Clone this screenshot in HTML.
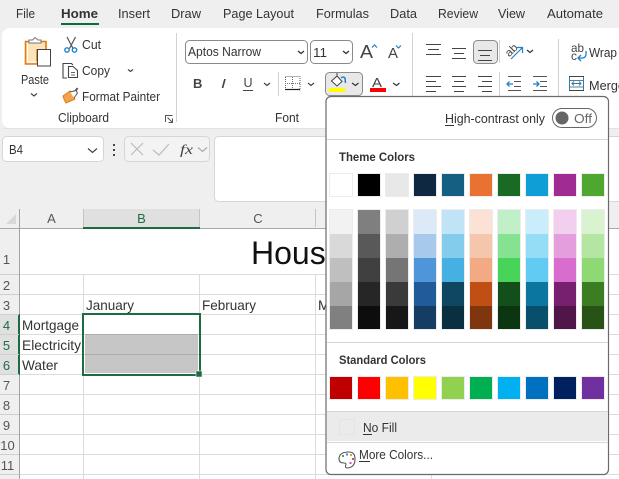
<!DOCTYPE html>
<html><head><meta charset="utf-8"><style>
html,body{margin:0;padding:0;background:#efefef;width:619px;height:479px;overflow:hidden}
svg{display:block}
text{font-family:"Liberation Sans",sans-serif;fill:#333}
</style></head><body>
<svg width="619" height="479" viewBox="0 0 619 479" xmlns="http://www.w3.org/2000/svg">
<rect width="619" height="479" fill="#efefef"/>
<!-- tabs -->
<g font-size="13">
<text x="16" y="18" textLength="19" lengthAdjust="spacingAndGlyphs">File</text>
<text x="61" y="18" textLength="37" lengthAdjust="spacingAndGlyphs" font-weight="bold" style="fill:#333">Home</text>
<text x="118" y="18" textLength="32" lengthAdjust="spacingAndGlyphs">Insert</text>
<text x="171" y="18" textLength="30" lengthAdjust="spacingAndGlyphs">Draw</text>
<text x="223" y="18" textLength="71" lengthAdjust="spacingAndGlyphs">Page Layout</text>
<text x="316" y="18" textLength="53" lengthAdjust="spacingAndGlyphs">Formulas</text>
<text x="390" y="18" textLength="27" lengthAdjust="spacingAndGlyphs">Data</text>
<text x="438" y="18" textLength="40" lengthAdjust="spacingAndGlyphs">Review</text>
<text x="498" y="18" textLength="27" lengthAdjust="spacingAndGlyphs">View</text>
<text x="547" y="18" textLength="56" lengthAdjust="spacingAndGlyphs">Automate</text>
</g>
<rect x="61" y="23" width="38" height="2" fill="#0f6b3c"/>
<!-- ribbon -->
<rect x="2" y="28" width="640" height="100" rx="8" fill="#fff"/>
<path d="M3 128.500H619" stroke="#e2e2e2"/>
<g stroke="#d2d2d2"><path d="M176.500 33V122M412.500 33V96M558.500 39V96M278.500 72V96M499.500 40V63M499.500 72V96"/></g>
<!-- paste -->
<path d="M25.500 41.500H46V50H37V64H25.500Z" fill="#fde3b8" stroke="#e07b10" stroke-width="1.600"/>
<path d="M27.500 43V62H37" fill="none" stroke="#fff" stroke-width="1"/>
<path d="M29 43V40H32.500L35 37.500L38 40H41V43Z" fill="#fff" stroke="#777"/>
<rect x="37.500" y="49.500" width="13" height="16.500" fill="#fff" stroke="#444"/>
<text x="21" y="84" font-size="12.500" textLength="28" lengthAdjust="spacingAndGlyphs">Paste</text>
<path d="M31 93.500L34 96L37 93.500" fill="none" stroke="#444" stroke-width="1.200"/>
<!-- cut -->
<path d="M67 37L73 48.500M75.500 37L69.500 48.500" stroke="#555" stroke-width="1.200" fill="none"/>
<circle cx="67" cy="50" r="2.200" fill="none" stroke="#1b82c8" stroke-width="1.400"/><circle cx="74.500" cy="50" r="2.200" fill="none" stroke="#1b82c8" stroke-width="1.400"/>
<text x="82" y="49" font-size="12.500" textLength="19" lengthAdjust="spacingAndGlyphs">Cut</text>
<!-- copy -->
<path d="M67 78H63V63.500H71.500L73 65" fill="none" stroke="#444" stroke-width="1.100"/>
<path d="M68.500 77.500V66.500H73L77.500 70.500V77.500Z" fill="#fff" stroke="#444" stroke-width="1.100"/>
<path d="M71 72.500H75M71 75H75" stroke="#666"/>
<text x="82" y="75" font-size="12.500" textLength="28" lengthAdjust="spacingAndGlyphs">Copy</text>
<path d="M128 69.500L130.500 71.500L133 69.500" fill="none" stroke="#444" stroke-width="1.200"/>
<!-- format painter -->
<path d="M63 96L70 91L75 99L66 103Q64 100 63 96Z" fill="#f5a34a" stroke="#dd7a1a"/>
<path d="M70 92L76 90.500L77.500 93L74 98" fill="#fff" stroke="#555"/>
<path d="M75.500 91L77.500 88" stroke="#555" stroke-width="2"/>
<text x="82" y="101" font-size="12.500" textLength="78" lengthAdjust="spacingAndGlyphs">Format Painter</text>
<text x="58" y="122" font-size="12.500" textLength="51" lengthAdjust="spacingAndGlyphs">Clipboard</text>
<path d="M165.500 122V115.500H172.500M167.500 117.500L172 122M172.500 118.500V122.500H168.500" fill="none" stroke="#555"/>
<!-- font combos -->
<rect x="185.500" y="40.500" width="122" height="23" rx="4" fill="#fff" stroke="#8a8a8a"/>
<text x="188" y="56" font-size="12.500" textLength="73" lengthAdjust="spacingAndGlyphs">Aptos Narrow</text>
<path d="M298 51L301 53.500L304 51" fill="none" stroke="#333" stroke-width="1.300"/>
<rect x="310.500" y="40.500" width="42" height="23" rx="4" fill="#fff" stroke="#8a8a8a"/>
<text x="313" y="57" font-size="12.500" textLength="14" lengthAdjust="spacingAndGlyphs">11</text>
<path d="M343 51L346 53.500L349 51" fill="none" stroke="#333" stroke-width="1.300"/>
<text x="360" y="58" font-size="18" textLength="13" lengthAdjust="spacingAndGlyphs" style="fill:#444">A</text>
<path d="M372 47.500L374.500 45L377 47.500" fill="none" stroke="#1b82c8" stroke-width="1.200"/>
<text x="388" y="58" font-size="14.500" textLength="10" lengthAdjust="spacingAndGlyphs" style="fill:#444">A</text>
<path d="M396 45.500L398.500 48L401 45.500" fill="none" stroke="#1b82c8" stroke-width="1.200"/>
<!-- B I U -->
<text x="193" y="88" font-size="13" font-weight="bold" style="fill:#444">B</text>
<text x="221" y="88" font-size="13" font-style="italic" style="fill:#444" textLength="5" lengthAdjust="spacingAndGlyphs">I</text>
<text x="243.500" y="87" font-size="12.500" style="fill:#444">U</text>
<path d="M243 90.500H253" stroke="#444"/>
<path d="M264 83L267 85.500L270 83" fill="none" stroke="#444" stroke-width="1.200"/>
<path d="M285.500 76.500H300V90.500" fill="none" stroke="#666" stroke-dasharray="1 1"/>
<path d="M285.500 77V90" fill="none" stroke="#666" stroke-dasharray="1 1"/>
<path d="M285 83.500H300M292.500 77V90" stroke="#777" stroke-dasharray="1 1"/>
<path d="M285 89.500H300" stroke="#222" stroke-width="1.200"/>
<path d="M308 83L311 85.500L314 83" fill="none" stroke="#444" stroke-width="1.200"/>
<text x="275" y="122" font-size="12.500" textLength="24" lengthAdjust="spacingAndGlyphs">Font</text>
<!-- fill button -->
<rect x="325.500" y="72.500" width="37" height="23" rx="4" fill="#e8e8e8" stroke="#8a8a8a"/>
<path d="M331.500 81L337 76L342 81.500L337 86Z" fill="#fff" stroke="#444"/>
<path d="M337 76V73" stroke="#444"/>
<path d="M341 78Q343 76 345 78L345.500 83" fill="none" stroke="#1b82c8" stroke-width="1.500"/>
<rect x="329" y="88" width="16" height="4" fill="#ffff00"/>
<path d="M352 83L355.500 85.500L358.500 83" fill="none" stroke="#333" stroke-width="1.200"/>
<text x="372" y="87" font-size="13" textLength="10" lengthAdjust="spacingAndGlyphs" style="fill:#444">A</text>
<rect x="370" y="88" width="16" height="4" fill="#ff0000"/>
<path d="M393 83L396.500 85.500L399.500 83" fill="none" stroke="#333" stroke-width="1.200"/>
<!-- alignment -->
<g stroke="#444" stroke-width="1" fill="none">
<path d="M426 44.500H441M428 49.500H439M426 54.500H441"/>
<path d="M452 48.500H466M454 53.500H464M452 58.500H466"/>
</g>
<rect x="473.500" y="40.500" width="24" height="23" rx="4" fill="#e8e8e8" stroke="#8a8a8a"/>
<path d="M478 50.500H492M480 55.500H490M478 60.500H492" stroke="#444" fill="none"/>
<g stroke="#444" fill="none">
<path d="M426 76.500H441M426 81.500H436M426 86.500H441M426 91.500H436"/>
<path d="M452 76.500H466M454 81.500H464M452 86.500H466M454 91.500H464"/>
<path d="M478 76.500H492M482 81.500H492M478 86.500H492M482 91.500H492"/>
<path d="M508 76.500H521M514 81.500H521M514 86.500H521M508 90.500H521" stroke="#555"/>
<path d="M533 76.500H547M540 81.500H547M540 86.500H547M533 90.500H547" stroke="#555"/>
</g>
<path d="M513 84H507M509.500 81.500L507 84L509.500 86.500" fill="none" stroke="#1b82c8" stroke-width="1.300"/>
<path d="M533 84H539M536.500 81.500L539 84L536.500 86.500" fill="none" stroke="#1b82c8" stroke-width="1.300"/>
<!-- orientation -->
<text x="505" y="55" font-size="11" transform="rotate(-45 510 51)" textLength="13" lengthAdjust="spacingAndGlyphs" style="fill:#444">ab</text>
<path d="M511 59L522 48M517 47.500H522.500V53" fill="none" stroke="#1b82c8" stroke-width="1.200"/>
<path d="M527 50L530 52.500L533 50" fill="none" stroke="#333" stroke-width="1.200"/>
<!-- wrap / merge -->
<text x="571" y="52" font-size="12" textLength="13" lengthAdjust="spacingAndGlyphs" style="fill:#444">ab</text>
<text x="571" y="60" font-size="12" style="fill:#444">c</text>
<path d="M586 51V54Q586 58 582 58H578M581 55L578 58L581 61" fill="none" stroke="#1b82c8" stroke-width="1.300"/>
<text x="589" y="57" font-size="13" textLength="28" lengthAdjust="spacingAndGlyphs">Wrap</text>
<rect x="569.500" y="76.500" width="14" height="14" fill="#fff" stroke="#2a7fb8"/>
<path d="M569 76.500H584M569 90.500H584" stroke="#444"/>
<path d="M570 80.500H583M570 87H583" stroke="#777"/>
<path d="M572 83.500H581M574 81.500L572 83.500L574 85.500M579 81.500L581 83.500L579 85.500" fill="none" stroke="#1b82c8"/>
<text x="589" y="90" font-size="13" textLength="36" lengthAdjust="spacingAndGlyphs">Merge</text>
<!-- formula bar -->
<rect x="2.500" y="136.500" width="101" height="25" rx="4" fill="#fff" stroke="#d6d6d6"/>
<text x="9" y="154" font-size="12.500" textLength="14" lengthAdjust="spacingAndGlyphs">B4</text>
<path d="M88 148.500L92.500 152.500L97 148.500" fill="none" stroke="#444" stroke-width="1.200"/>
<g fill="#444"><rect x="113" y="144" width="2" height="2"/><rect x="113" y="149" width="2" height="2"/><rect x="113" y="154" width="2" height="2"/></g>
<rect x="124.500" y="136.500" width="85" height="25" rx="4" fill="#f3f3f3" stroke="#d6d6d6"/>
<path d="M131 143L143 155M143 143L131 155" stroke="#bcbcbc" stroke-width="1.200"/>
<path d="M153 150L159 155L169 144" fill="none" stroke="#bcbcbc" stroke-width="1.200"/>
<text x="180" y="154" font-size="14" font-style="italic" style="font-family:'Liberation Serif';fill:#444" textLength="13" lengthAdjust="spacingAndGlyphs">fx</text>
<path d="M198 147.500L202.500 151.500L207 147.500" fill="none" stroke="#aaa" stroke-width="1.200"/>
<rect x="214.500" y="136.500" width="420" height="65" rx="4" fill="#fff" stroke="#d6d6d6"/>
<!-- sheet -->
<rect x="0" y="209" width="619" height="20" fill="#efefef"/>
<rect x="20" y="229" width="599" height="250" fill="#fff"/>
<rect x="84" y="209" width="116" height="19" fill="#e0e0e0"/>
<rect x="83" y="227" width="117" height="2" fill="#1e6b43"/>
<rect x="0" y="314" width="19" height="60" fill="#e0e0e0"/>
<rect x="18" y="314" width="2" height="61" fill="#1e6b43"/>
<path d="M6 224L16 214V224Z" fill="#d8d8d8"/>
<path d="M83.500 209V227M199.500 209V227M315.500 209V227" stroke="#c4c4c4"/>
<path d="M0 228.500H83M200 228.500H619" stroke="#a8a8a8"/>
<path d="M19.500 209V314M19.500 375V479" stroke="#a3a3a3"/>
<g stroke="#dcdcdc">
<path d="M83.500 274V479M199.500 274V479M315.500 274V479M431.500 274V479"/>
<path d="M20 274.500H619M20 294.500H619M20 314.500H619M20 334.500H619M20 354.500H619M20 374.500H619M20 394.500H619M20 414.500H619M20 434.500H619M20 454.500H619M20 474.500H619"/>
<path d="M0 274.500H19M0 294.500H19M0 314.500H19M0 334.500H19M0 354.500H19M0 374.500H19M0 394.500H19M0 414.500H19M0 434.500H19M0 454.500H19M0 474.500H19" stroke="#cfcfcf"/>
</g>
<g font-size="13" text-anchor="middle">
<text x="51.500" y="223" style="fill:#555">A</text><text x="141.500" y="223" style="fill:#1e6b43">B</text><text x="258" y="223" style="fill:#555">C</text>
<text x="6.500" y="264" style="fill:#555">1</text><text x="6.500" y="290" style="fill:#555">2</text><text x="6.500" y="310" style="fill:#555">3</text>
<text x="6.500" y="330" style="fill:#1e6b43">4</text><text x="6.500" y="350" style="fill:#1e6b43">5</text><text x="6.500" y="370" style="fill:#1e6b43">6</text>
<text x="6.500" y="390" style="fill:#555">7</text><text x="6.500" y="410" style="fill:#555">8</text><text x="6.500" y="430" style="fill:#555">9</text>
<text x="7.500" y="450" style="fill:#555">10</text><text x="7.500" y="470" style="fill:#555">11</text>
</g>
<text x="251" y="264" font-size="32" style="fill:#111">Hous</text>
<g font-size="14">
<text x="86" y="310" textLength="48" lengthAdjust="spacingAndGlyphs">January</text>
<text x="202" y="310" textLength="54" lengthAdjust="spacingAndGlyphs">February</text>
<text x="318" y="310">M</text>
<text x="22" y="330" textLength="57" lengthAdjust="spacingAndGlyphs">Mortgage</text>
<text x="22" y="350" textLength="59" lengthAdjust="spacingAndGlyphs">Electricity</text>
<text x="22" y="370" textLength="36" lengthAdjust="spacingAndGlyphs">Water</text>
</g>
<rect x="85" y="334" width="113" height="39" fill="#c6c6c6"/>
<path d="M85 334.500H198M85 354.500H198" stroke="#acacac"/>
<rect x="83" y="314" width="117" height="61" fill="none" stroke="#1e6b43" stroke-width="2"/>
<rect x="196" y="371" width="6" height="6" fill="#1e6b43" stroke="#fff" stroke-width="0.500"/>
<!-- popup -->
<rect x="326" y="96.500" width="282.500" height="378" rx="5" fill="#fff" stroke="#6a6a6a" stroke-width="1.200"/>
<text x="445" y="123" font-size="12.500" textLength="100" lengthAdjust="spacingAndGlyphs">High-contrast only</text>
<path d="M445 125.500H454" stroke="#333"/>
<rect x="552.500" y="108.500" width="44" height="19" rx="9.500" fill="#fff" stroke="#666"/>
<circle cx="562" cy="118" r="6.500" fill="#666"/>
<text x="574" y="123" font-size="12.500" style="fill:#666" textLength="18" lengthAdjust="spacingAndGlyphs">Off</text>
<path d="M327 139.500H608M327 342.500H608M327 411.500H608M327 442.500H608" stroke="#d6d6d6"/>
<text x="339" y="161" font-size="12" font-weight="bold" textLength="76" lengthAdjust="spacingAndGlyphs" style="fill:#333">Theme Colors</text>
<text x="339" y="364" font-size="12" font-weight="bold" textLength="87" lengthAdjust="spacingAndGlyphs" style="fill:#333">Standard Colors</text>
<!-- theme row -->
<g stroke="#ececec" stroke-width="1">
<rect x="329.500" y="173.500" width="23" height="23" fill="#ffffff"/>
<rect x="357.500" y="173.500" width="23" height="23" fill="#000000"/>
<rect x="385.500" y="173.500" width="23" height="23" fill="#e8e8e8"/>
<rect x="413.500" y="173.500" width="23" height="23" fill="#0e2841"/>
<rect x="441.500" y="173.500" width="23" height="23" fill="#156082"/>
<rect x="469.500" y="173.500" width="23" height="23" fill="#e97132"/>
<rect x="497.500" y="173.500" width="23" height="23" fill="#196b24"/>
<rect x="525.500" y="173.500" width="23" height="23" fill="#0f9ed5"/>
<rect x="553.500" y="173.500" width="23" height="23" fill="#a02b93"/>
<rect x="581.500" y="173.500" width="23" height="23" fill="#4ea72e"/>
</g>
<!-- shades frame -->
<g fill="none" stroke="#ececec">
<rect x="329.500" y="209.500" width="23" height="120"/><rect x="357.500" y="209.500" width="23" height="120"/><rect x="385.500" y="209.500" width="23" height="120"/><rect x="413.500" y="209.500" width="23" height="120"/><rect x="441.500" y="209.500" width="23" height="120"/><rect x="469.500" y="209.500" width="23" height="120"/><rect x="497.500" y="209.500" width="23" height="120"/><rect x="525.500" y="209.500" width="23" height="120"/><rect x="553.500" y="209.500" width="23" height="120"/><rect x="581.500" y="209.500" width="23" height="120"/>
</g>
<g>
<rect x="330" y="210" width="22" height="24" fill="#f2f2f2"/><rect x="330" y="234" width="22" height="24" fill="#d9d9d9"/><rect x="330" y="258" width="22" height="24" fill="#bfbfbf"/><rect x="330" y="282" width="22" height="24" fill="#a6a6a6"/><rect x="330" y="306" width="22" height="23" fill="#808080"/>
<rect x="358" y="210" width="22" height="24" fill="#7f7f7f"/><rect x="358" y="234" width="22" height="24" fill="#595959"/><rect x="358" y="258" width="22" height="24" fill="#404040"/><rect x="358" y="282" width="22" height="24" fill="#262626"/><rect x="358" y="306" width="22" height="23" fill="#0d0d0d"/>
<rect x="386" y="210" width="22" height="24" fill="#d0d0d0"/><rect x="386" y="234" width="22" height="24" fill="#aeaeae"/><rect x="386" y="258" width="22" height="24" fill="#757575"/><rect x="386" y="282" width="22" height="24" fill="#3a3a3a"/><rect x="386" y="306" width="22" height="23" fill="#171717"/>
<rect x="414" y="210" width="22" height="24" fill="#dce9f7"/><rect x="414" y="234" width="22" height="24" fill="#a6c9ec"/><rect x="414" y="258" width="22" height="24" fill="#4e95d9"/><rect x="414" y="282" width="22" height="24" fill="#215c98"/><rect x="414" y="306" width="22" height="23" fill="#153d64"/>
<rect x="442" y="210" width="22" height="24" fill="#c0e4f5"/><rect x="442" y="234" width="22" height="24" fill="#83cceb"/><rect x="442" y="258" width="22" height="24" fill="#45b0e1"/><rect x="442" y="282" width="22" height="24" fill="#0f4761"/><rect x="442" y="306" width="22" height="23" fill="#0a2f41"/>
<rect x="470" y="210" width="22" height="24" fill="#fbe2d5"/><rect x="470" y="234" width="22" height="24" fill="#f6c6ac"/><rect x="470" y="258" width="22" height="24" fill="#f2aa84"/><rect x="470" y="282" width="22" height="24" fill="#c04f15"/><rect x="470" y="306" width="22" height="23" fill="#7f350e"/>
<rect x="498" y="210" width="22" height="24" fill="#c1f0c8"/><rect x="498" y="234" width="22" height="24" fill="#84e291"/><rect x="498" y="258" width="22" height="24" fill="#47d459"/><rect x="498" y="282" width="22" height="24" fill="#124f1a"/><rect x="498" y="306" width="22" height="23" fill="#0c3511"/>
<rect x="526" y="210" width="22" height="24" fill="#caedfb"/><rect x="526" y="234" width="22" height="24" fill="#95dcf7"/><rect x="526" y="258" width="22" height="24" fill="#61cbf3"/><rect x="526" y="282" width="22" height="24" fill="#0b76a0"/><rect x="526" y="306" width="22" height="23" fill="#074f6a"/>
<rect x="554" y="210" width="22" height="24" fill="#f2ceef"/><rect x="554" y="234" width="22" height="24" fill="#e59edd"/><rect x="554" y="258" width="22" height="24" fill="#d86dcd"/><rect x="554" y="282" width="22" height="24" fill="#782070"/><rect x="554" y="306" width="22" height="23" fill="#501549"/>
<rect x="582" y="210" width="22" height="24" fill="#d9f2d0"/><rect x="582" y="234" width="22" height="24" fill="#b4e5a2"/><rect x="582" y="258" width="22" height="24" fill="#8ed973"/><rect x="582" y="282" width="22" height="24" fill="#3b7d23"/><rect x="582" y="306" width="22" height="23" fill="#275317"/>
</g>
<!-- standard -->
<g stroke="#ececec">
<rect x="329.500" y="376.500" width="23" height="23" fill="#c00000"/>
<rect x="357.500" y="376.500" width="23" height="23" fill="#ff0000"/>
<rect x="385.500" y="376.500" width="23" height="23" fill="#ffc000"/>
<rect x="413.500" y="376.500" width="23" height="23" fill="#ffff00"/>
<rect x="441.500" y="376.500" width="23" height="23" fill="#92d050"/>
<rect x="469.500" y="376.500" width="23" height="23" fill="#00b050"/>
<rect x="497.500" y="376.500" width="23" height="23" fill="#00b0f0"/>
<rect x="525.500" y="376.500" width="23" height="23" fill="#0070c0"/>
<rect x="553.500" y="376.500" width="23" height="23" fill="#002060"/>
<rect x="581.500" y="376.500" width="23" height="23" fill="#7030a0"/>
</g>
<!-- no fill -->
<rect x="327" y="412" width="281" height="29" fill="#ebebeb"/>
<rect x="339.500" y="419.500" width="15" height="15" fill="none" stroke="#e4e4e4"/>
<text x="363" y="432" font-size="12.500" textLength="34" lengthAdjust="spacingAndGlyphs">No Fill</text>
<path d="M363 434.500H372" stroke="#333"/>
<!-- more colours -->
<path d="M349 452Q339 452 339 459Q339 463 344 463Q347 463 345.500 466Q345 468 348 468Q355 467 355 459Q355 452 349 452Z" fill="#fff" stroke="#555" stroke-width="1.100"/>
<g>
<rect x="342" y="455" width="2" height="2" fill="#4aa564"/><rect x="346" y="453.500" width="2" height="2" fill="#2d8fd5"/><rect x="350" y="454" width="2" height="2" fill="#e89a3c"/><rect x="352" y="458" width="2" height="2" fill="#d54a8f"/><rect x="349.500" y="462" width="2" height="2" fill="#d85a9c"/>
</g>
<text x="359" y="459" font-size="12.500" textLength="74" lengthAdjust="spacingAndGlyphs">More Colors...</text>
<path d="M359 461.500H370" stroke="#333"/>
</svg>
</body></html>
